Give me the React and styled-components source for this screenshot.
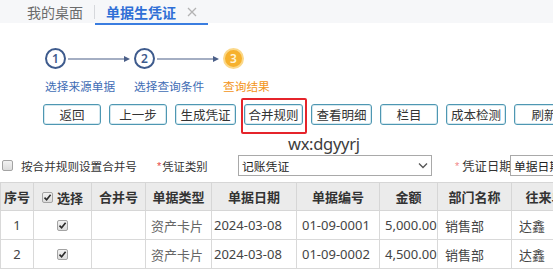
import React from 'react';
import styled, { createGlobalStyle } from 'styled-components';

const Global = createGlobalStyle`
  html, body { margin: 0; padding: 0; background: #fff; overflow: hidden; }
  body {
    font-family: "Noto Sans", "Noto Sans CJK SC", sans-serif;
    color: #333;
    width: 553px;
    height: 273px;
  }
`;

const Page = styled.div`
  position: relative;
  width: 553px;
  height: 273px;
  overflow: hidden;
`;

const TabBar = styled.div`
  display: flex;
  align-items: stretch;
  height: 25px;
  box-sizing: border-box;
  background: linear-gradient(#f6f7f9, #f6f7f9 23px, #fff 23px);
`;

const Tab = styled.div`
  display: flex;
  align-items: center;
  gap: 11px;
  padding: ${p => (p.$active ? '0 11px' : '0 11px 0 27px')};
  border-bottom: 2px solid ${p => (p.$active ? '#3a7de0' : 'transparent')};
  font-family: "Noto Sans CJK SC", sans-serif;
  font-size: 14px;
  line-height: 16px;
  font-weight: ${p => (p.$active ? 700 : 400)};
  color: ${p => (p.$active ? '#2f6fd6' : '#6b6b6b')};
`;

const TabDivider = styled.div`
  align-self: center;
  width: 1px;
  height: 14px;
  margin-bottom: 2px;
  background: #d6d8dc;
`;

const CloseIcon = () => (
  <svg width="10" height="10" viewBox="0 0 10 10">
    <path d="M1 1L9 9M9 1L1 9" stroke="#b3b3b3" strokeWidth="1.3" fill="none" />
  </svg>
);

const Steps = styled.div`
  display: flex;
  padding: 23px 0 0 45px;
`;

const StepItem = styled.div`
  display: flex;
  flex-direction: column;
  width: 89px;
`;

const StepHead = styled.div`
  display: flex;
  align-items: center;
  height: 21px;
`;

const Circle = styled.div`
  width: 21px;
  height: 21px;
  box-sizing: border-box;
  border-radius: 50%;
  border: 2px solid ${p => (p.$current ? '#fbd889' : '#3e5b8d')};
  background: ${p => (p.$current ? '#f6b12d' : '#fff')};
  color: ${p => (p.$current ? '#fff4d6' : '#3e5b8d')};
  display: flex;
  align-items: center;
  justify-content: center;
  font-family: "Noto Sans", sans-serif;
  font-size: 12px;
  font-weight: 600;
  line-height: 1;
`;

const Arrow = styled.svg`
  margin-left: 2px;
`;

const StepLabel = styled.div`
  margin-top: 9px;
  font-family: "Noto Sans CJK SC", sans-serif;
  font-size: 11.7px;
  line-height: 16px;
  white-space: nowrap;
  color: ${p => (p.$current ? '#f39420' : '#3f6db5')};
`;

const ButtonRow = styled.div`
  display: flex;
  gap: 8px;
  margin-top: 10px;
  padding-left: 43px;
`;

const Button = styled.button`
  flex: none;
  width: ${p => p.$w}px;
  height: 21px;
  box-sizing: border-box;
  padding: 0;
  border: 1px solid #4e97b2;
  box-shadow: inset 0 0 0 1px #d5e8ef;
  border-radius: 3px;
  background: #fff;
  color: #333;
  font-family: "Noto Sans CJK SC", sans-serif;
  font-size: 12.5px;
  line-height: 19px;
  white-space: nowrap;
  overflow: hidden;
`;

const FormRow = styled.div`
  display: flex;
  align-items: center;
  height: 21px;
  margin-top: 30px;
  white-space: nowrap;
`;

const CheckBox = styled.span`
  flex: none;
  display: inline-flex;
  align-items: center;
  justify-content: center;
  width: 11px;
  height: 11px;
  box-sizing: border-box;
  margin-left: ${p => p.$ml || 0}px;
  border: 1px solid #a3a3a3;
  border-radius: 2px;
  background: linear-gradient(#f2f2f2, #dcdcdc);
`;

const Check = ({ checked, ml }) => (
  <CheckBox $ml={ml}>
    {checked && (
      <svg width="9" height="9" viewBox="0 0 9 9">
        <path d="M1.5 4.6L3.6 6.8L7.6 1.8" stroke="#2b2b2b" strokeWidth="1.6" fill="none" />
      </svg>
    )}
  </CheckBox>
);

const FieldText = styled.span`
  flex: none;
  display: inline-flex;
  align-items: center;
  width: ${p => p.$w}px;
  margin-left: ${p => p.$ml || 0}px;
  font-family: "Noto Sans CJK SC", sans-serif;
  font-size: ${p => p.$fs || 11.6}px;
  line-height: 16px;
  color: #333;
  white-space: nowrap;
`;

const Star = styled.span`
  font-family: "Liberation Sans", sans-serif;
  font-size: 11px;
  color: ${p => (p.$light ? '#f28a8a' : '#e84545')};
  margin-right: ${p => (p.$light ? 3 : 1)}px;
`;

const Select = styled.div`
  flex: none;
  display: flex;
  align-items: center;
  justify-content: space-between;
  width: ${p => p.$w}px;
  height: 21px;
  box-sizing: border-box;
  margin-left: ${p => p.$ml || 0}px;
  padding: 0 3px;
  border: 1px solid #a9a9a9;
  background: #fff;
  font-family: "Noto Sans CJK SC", sans-serif;
  font-size: 11.8px;
  line-height: 16px;
  color: #222;
  white-space: nowrap;
`;

const Chevron = () => (
  <svg width="10" height="7" viewBox="0 0 10 7">
    <path d="M1 1.5L5 5.5L9 1.5" stroke="#555" strokeWidth="1.3" fill="none" />
  </svg>
);

const Table = styled.table`
  margin-top: 6px;
  border-collapse: collapse;
  table-layout: fixed;
  width: 585px;
  font-family: "Noto Sans", "Noto Sans CJK SC", sans-serif;
  font-size: 13px;
`;

const Th = styled.th`
  height: 27px;
  padding: 0;
  background: #ebebeb;
  border: 1px solid #d6d6d6;
  font-family: "Noto Sans CJK SC", sans-serif;
  font-weight: 700;
  color: #333;
  text-align: center;
  white-space: nowrap;
  overflow: hidden;
`;

const Td = styled.td`
  height: 28px;
  padding: 0 ${p => p.$pr ?? 5}px 0 ${p => p.$pl ?? 5}px;
  border: 1px solid #d9d9d9;
  color: ${p => (p.$muted ? '#666' : '#444')};
  text-align: ${p => p.$align || 'left'};
  white-space: nowrap;
  overflow: hidden;
`;

const HeadCheck = styled.span`
  display: inline-flex;
  align-items: center;
  gap: 4px;
`;

const RedBox = styled.div`
  position: absolute;
  left: 241px;
  top: 98px;
  width: 66px;
  height: 36px;
  box-sizing: border-box;
  border: 2px solid #e5242b;
  border-radius: 2px;
  pointer-events: none;
`;

const Watermark = styled.div`
  position: absolute;
  left: 288px;
  top: 133px;
  font-family: "Noto Sans", sans-serif;
  font-size: 16.5px;
  line-height: 22px;
  letter-spacing: -0.3px;
  color: #3d3d3d;
`;

const steps = [
  { n: 1, label: '选择来源单据' },
  { n: 2, label: '选择查询条件' },
  { n: 3, label: '查询结果', current: true },
];

const buttons = [
  ['返回', 58], ['上一步', 58], ['生成凭证', 61], ['合并规则', 59],
  ['查看明细', 61], ['栏目', 58], ['成本检测', 60], ['刷新', 60],
];

const cols = [33, 58, 54, 66, 85, 83, 58, 74, 80];

const rows = [
  { no: 1, type: '资产卡片', date: '2024-03-08', code: '01-09-0001', amt: '5,000.00', dept: '销售部', unit: '达鑫' },
  { no: 2, type: '资产卡片', date: '2024-03-08', code: '01-09-0002', amt: '4,500.00', dept: '销售部', unit: '达鑫' },
];

export default function App() {
  return (
    <Page>
      <Global />
      <TabBar>
        <Tab>我的桌面</Tab>
        <TabDivider />
        <Tab $active>
          单据生凭证
          <CloseIcon />
        </Tab>
      </TabBar>

      <Steps>
        {steps.map(s => (
          <StepItem key={s.n}>
            <StepHead>
              <Circle $current={s.current}>{s.n}</Circle>
              {!s.current && (
                <Arrow width="62" height="8" viewBox="0 0 62 8">
                  <path d="M0 4H57" stroke="#4b5f88" strokeWidth="1.2" />
                  <path d="M56 1L62 4L56 7Z" fill="#4b5f88" />
                </Arrow>
              )}
            </StepHead>
            <StepLabel $current={s.current}>{s.label}</StepLabel>
          </StepItem>
        ))}
      </Steps>

      <ButtonRow>
        {buttons.map(([t, w]) => (
          <Button key={t} $w={w}>{t}</Button>
        ))}
      </ButtonRow>

      <FormRow>
        <Check ml={2} />
        <FieldText $ml={8} $w={116}>按合并规则设置合并号</FieldText>
        <FieldText $ml={20} $w={52} $fs={11.3}><Star>*</Star>凭证类别</FieldText>
        <Select $w={194} $ml={29}>
          <span>记账凭证</span>
          <Chevron />
        </Select>
        <FieldText $ml={23} $w={55} $fs={12.3}><Star $light>*</Star>凭证日期</FieldText>
        <Select $w={80}>
          <span>单据日期</span>
        </Select>
      </FormRow>

      <Table>
        <colgroup>
          {cols.map((w, i) => <col key={i} style={{ width: w }} />)}
        </colgroup>
        <thead>
          <tr>
            <Th>序号</Th>
            <Th><HeadCheck><Check checked />选择</HeadCheck></Th>
            <Th>合并号</Th>
            <Th>单据类型</Th>
            <Th>单据日期</Th>
            <Th>单据编号</Th>
            <Th>金额</Th>
            <Th>部门名称</Th>
            <Th>往来单位</Th>
          </tr>
        </thead>
        <tbody>
          {rows.map(r => (
            <tr key={r.no}>
              <Td $align="center">{r.no}</Td>
              <Td $align="center"><Check checked /></Td>
              <Td />
              <Td $muted>{r.type}</Td>
              <Td $pl={2}>{r.date}</Td>
              <Td>{r.code}</Td>
              <Td $align="right" $pr={6}>{r.amt}</Td>
              <Td $pl={7}>{r.dept}</Td>
              <Td $pl={7}>{r.unit}</Td>
            </tr>
          ))}
        </tbody>
      </Table>

      <RedBox />
      <Watermark>wx:dgyyrj</Watermark>
    </Page>
  );
}
